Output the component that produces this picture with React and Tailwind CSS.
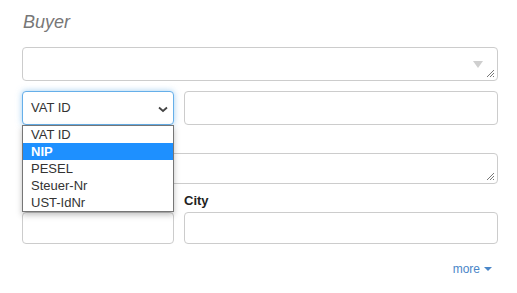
import React from 'react'

const field = 'block w-full rounded-[4px] border border-[#cccccc] bg-white'

function ResizeGrip() {
  return (
    <svg className="absolute right-[2px] bottom-[2px]" width="9" height="9" viewBox="0 0 9 9">
      <path d="M8 1 L1 8 M8 4 L4 8 M8 7 L7 8" stroke="#555" strokeWidth="0.8" fill="none" />
    </svg>
  )
}

export default function App() {
  const options = ['VAT ID', 'NIP', 'PESEL', 'Steuer-Nr', 'UST-IdNr']

  return (
    <div className="w-[517px] h-[293px] bg-white font-['Liberation_Sans',Arial,sans-serif] text-[13px] text-[#333]">
      <div className="w-[476px] ml-[22px] pt-[12px]">
        <h3 className="italic text-[18px] leading-[21px] text-[#777] pl-[1px]">Buyer</h3>

        {/* company name */}
        <div className={`${field} relative h-[34px] mt-[14px]`}>
          <svg className="absolute left-[450px] top-[13px]" width="10" height="7" viewBox="0 0 10 7">
            <path d="M0 0 H10 L5 7 Z" fill="#cfcfcf" />
          </svg>
          <ResizeGrip />
        </div>

        {/* tax id */}
        <div className="relative flex gap-[10px] mt-[10px]">
          <div className="relative w-[152px] h-[34px] rounded-[4px] border border-[#66afe9] shadow-[0_0_6px_rgba(102,175,233,0.6)] bg-white flex items-center pl-[8px]">
            <span>VAT ID</span>
            <svg className="absolute left-[135px] top-[14px]" width="10" height="7" viewBox="0 0 10 7">
              <path d="M1 1.5 L5 5 L9 1.5" stroke="#444" strokeWidth="1.8" fill="none" />
            </svg>
          </div>
          <div className={`${field} flex-1 h-[34px]`} />

          {/* open select list */}
          <ul className="absolute left-0 top-[34px] z-10 w-[152px] border border-[#767676] bg-white shadow-[0_3px_6px_rgba(0,0,0,0.25)] py-0">
            {options.map((o, i) => (
              <li
                key={o}
                className={`h-[17px] leading-[17px] pl-[8px] ${i === 1 ? 'bg-[#1e90ff] text-white font-bold' : 'text-[#333]'}`}
              >
                {o}
              </li>
            ))}
          </ul>
        </div>

        {/* address (label sits under the open list) */}
        <div className="mt-[6px]">
          <div className="h-[22px]" />
          <div className={`${field} relative h-[31px]`}>
            <ResizeGrip />
          </div>
        </div>

        {/* postal code / city */}
        <div className="flex gap-[10px] mt-[6px]">
          <div className="w-[152px]">
            <div className="h-[22px]" />
            <div className={`${field} h-[32px]`} />
          </div>
          <div className="flex-1">
            <label className="block font-bold h-[22px] leading-[22px] text-[#222]">City</label>
            <div className={`${field} h-[32px]`} />
          </div>
        </div>

        <div className="flex justify-end mt-[16px] pr-[6px]">
          <a className="flex items-center gap-[4px] text-[12px] text-[#4a86c8]">
            more
            <svg width="8" height="4" viewBox="0 0 8 4">
              <path d="M0 0 H8 L4 4 Z" fill="#4a86c8" />
            </svg>
          </a>
        </div>
      </div>
    </div>
  )
}
